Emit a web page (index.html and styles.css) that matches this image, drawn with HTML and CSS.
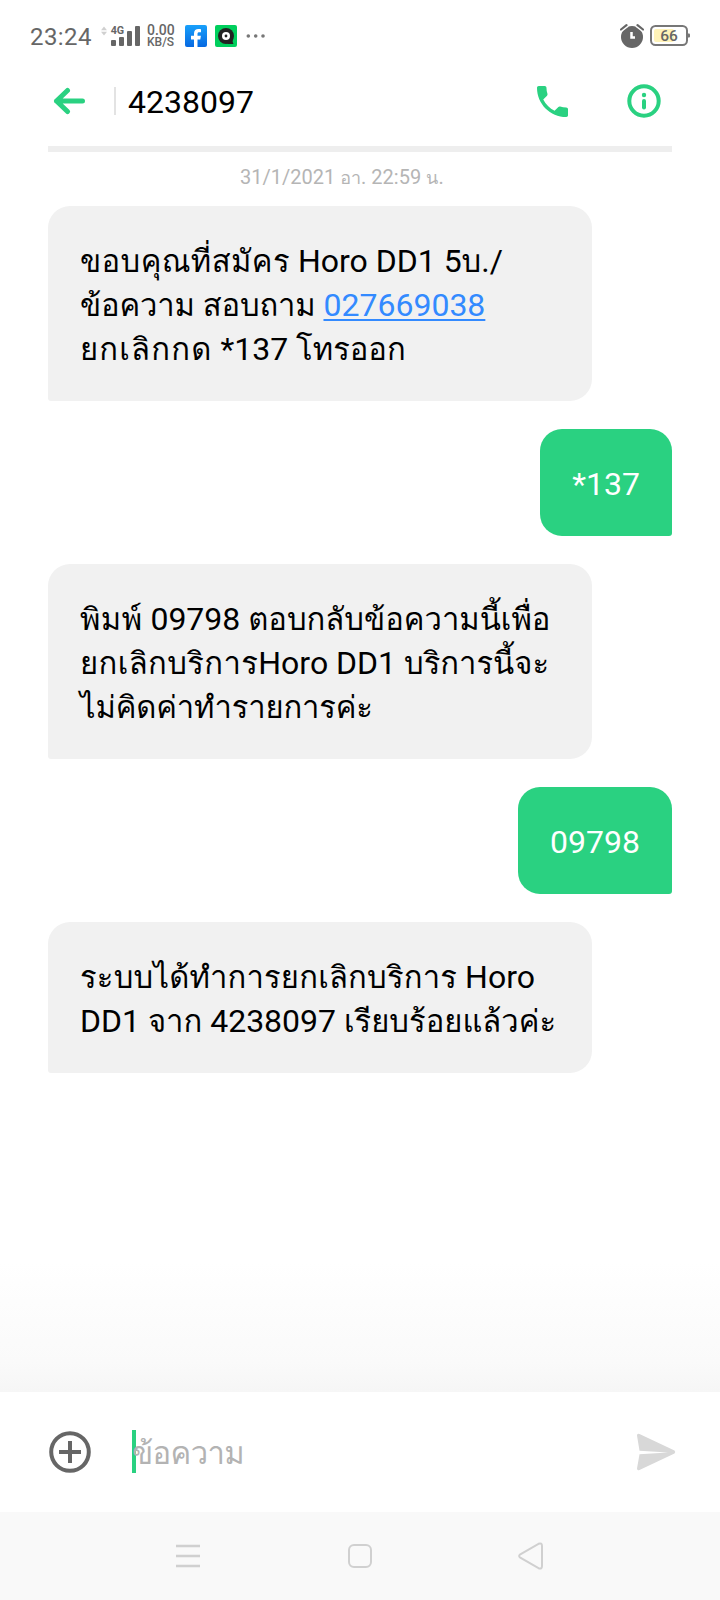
FILE: index.html
```html
<!DOCTYPE html>
<html lang="th">
<head>
<meta charset="utf-8">
<title>4238097</title>
<link rel="stylesheet" href="styles.css">
</head>
<body>
<div class="screen">
  <header class="status">
    <span class="clock">23:24</span>
    <svg class="signal" width="40" height="24" viewBox="0 0 40 24">
      <path d="M0 6.2 3 2.5 6 6.2ZM0 7.8h6L3 11.5Z" fill="#d0d0d0"/>
      <g fill="#666"><rect x="10" y="16" width="5" height="6" rx="1"/><rect x="18" y="13" width="5" height="9" rx="1"/><rect x="26" y="7" width="5" height="15" rx="1"/><rect x="34" y="2" width="5" height="20" rx="1"/></g>
      <text class="net" x="9.7" y="10" textLength="13.5" lengthAdjust="spacingAndGlyphs">4G</text>
    </svg>
    <span class="speed"><b class="rate">0.00</b><b class="unit">KB/S</b></span>
    <svg class="app" width="22" height="22" viewBox="0 0 22 22">
      <defs><linearGradient id="fb" x1="0" y1="0" x2="0" y2="1"><stop offset="0" stop-color="#18a0fb"/><stop offset="1" stop-color="#0668e1"/></linearGradient></defs>
      <rect width="22" height="22" rx="2" fill="url(#fb)"/>
      <path d="M9 22v-7.6H6v-3.6h3V8.6C9 5.4 10.8 4 13.4 4c1 0 1.9.1 2.6.2v3h-1.7c-1.4 0-1.8.7-1.8 1.7v1.9h3.4l-.6 3.6h-2.8V22Z" fill="#fff"/>
    </svg>
    <svg class="app" width="22" height="22" viewBox="0 0 22 22">
      <rect width="22" height="22" rx="2" fill="#00cf5d"/>
      <circle cx="11" cy="11" r="8" fill="#222"/>
      <path d="M12 19h6.500l-.8-2V12Z" fill="#222"/>
      <circle cx="11" cy="11" r="4" fill="#fff"/><circle cx="11" cy="11" r="1.400" fill="#222"/>
    </svg>
    <svg class="more" width="20" height="6" viewBox="0 0 20 6"><g fill="#777"><circle cx="2.300" cy="3" r="1.800"/><circle cx="9.700" cy="3" r="1.800"/><circle cx="17" cy="3" r="1.800"/></g></svg>
    <svg class="alarm" width="24" height="24" viewBox="0 0 24 24">
      <circle cx="12" cy="13" r="11" fill="#666"/>
      <path d="M0 8 8 2M24 8 16 2" stroke="#fff" stroke-width="2"/>
      <path d="M1 5.500 6.500 1.200M23 5.500 17.500 1.200" stroke="#666" stroke-width="2.200" stroke-linecap="round"/>
      <path d="M11.500 8v5.500H15" fill="none" stroke="#fff" stroke-width="2.500"/>
    </svg>
    <svg class="battery" width="40" height="22" viewBox="0 0 40 22">
      <rect x="1" y="1" width="36" height="19" rx="4.500" fill="#fff" stroke="#777" stroke-width="2"/>
      <path d="M38 8.500h1q1 0 1 1v2q0 1-1 1h-1Z" fill="#777"/>
      <rect x="4" y="4" width="20" height="13" rx="2" fill="#fff3b8"/>
      <text class="percent" x="19" y="16" text-anchor="middle">66</text>
    </svg>
  </header>

  <nav class="topbar">
    <svg class="back" width="32" height="28" viewBox="0 0 32 28"><path d="M3.500 14H29.500M14.500 3.500 3.500 14l11 10.500" fill="none" stroke="#2ad181" stroke-width="5" stroke-linecap="round" stroke-linejoin="round"/></svg>
    <span class="rule"></span>
    <h1 class="title">4238097</h1>
    <svg class="call" width="31" height="31" viewBox="3 3 18 18"><path d="M6.620 10.790c1.440 2.830 3.760 5.140 6.590 6.590l2.200-2.200c.27-.27.67-.36 1.020-.24 1.120.37 2.330.57 3.570.57.550 0 1 .450 1 1V20c0 .550-.450 1-1 1-9.390 0-17-7.610-17-17 0-.550.450-1 1-1h3.500c.550 0 1 .450 1 1 0 1.250.2 2.450.570 3.570.11.350.030.740-.250 1.020l-2.200 2.200z" fill="#2ad181"/></svg>
    <svg class="info" width="34" height="34" viewBox="0 0 34 34"><circle cx="17" cy="17" r="14.700" fill="none" stroke="#2ad181" stroke-width="4"/><circle cx="17" cy="11" r="2.200" fill="#2ad181"/><path d="M17 17v6.500" stroke="#2ad181" stroke-width="4" stroke-linecap="round"/></svg>
  </nav>

  <main class="thread">
    <time class="date">31/1/2021 <span class="th">อา</span>. 22:59 <span class="th">น</span>.</time>
    <div class="bubble in"><span class="line"><span class="th open">ขอบคุณที่สมัคร</span> Horo DD1 5<span class="th">บ</span>./</span><span class="line"><span class="th snug">ข้อความ</span> <span class="th snug">สอบถาม</span> <a class="tel">027669038</a></span><span class="line"><span class="th wide">ยกเลิกกด</span> *137 <span class="th">โทรออก</span></span></div>
    <div class="bubble out"><span class="line">*137</span></div>
    <div class="bubble in"><span class="line"><span class="th open">พิมพ์</span> 09798 <span class="th">ตอบกลับข้อความนี้เพื่อ</span></span><span class="line"><span class="th open">ยกเลิกบริการ</span>Horo DD1 <span class="th">บริการนี้จะ</span></span><span class="line"><span class="th snug">ไม่คิดค่าทำรายการค่ะ</span></span></div>
    <div class="bubble out"><span class="line">09798</span></div>
    <div class="bubble in"><span class="line"><span class="th loose">ระบบได้ทำการยกเลิกบริการ</span> Horo</span><span class="line">DD1 <span class="th">จาก</span> 4238097 <span class="th">เรียบร้อยแล้วค่ะ</span></span></div>
  </main>

  <section class="composer">
    <svg class="add" width="42" height="42" viewBox="0 0 42 42"><circle cx="21" cy="21" r="18.800" fill="none" stroke="#666" stroke-width="4"/><path d="M10 21h22M21 10v22" stroke="#666" stroke-width="4"/></svg>
    <div class="field"><span class="hint"><span class="th">ข้อความ</span></span></div>
    <svg class="send" width="40" height="38" viewBox="0 0 40 38"><path d="M1 2.500Q1 0 3.500 1L38.500 17.500Q40 19 38.500 20.500L3.500 37Q1 38 1 35.500L3.500 21.300 32 19.500 3.500 17.700Z" fill="#d8d8d8"/></svg>
  </section>

  <footer class="navbar">
    <svg width="24" height="24" viewBox="0 0 24 24"><path d="M0 2h24M0 12h24M0 22h24" stroke="#d0d0d0" stroke-width="2.300"/></svg>
    <svg class="home" width="24" height="24" viewBox="0 0 24 24"><rect x="1" y="1" width="22" height="22" rx="5" fill="none" stroke="#d0d0d0" stroke-width="2"/></svg>
    <svg width="26" height="28" viewBox="0 0 26 28"><path d="M2.300 12.300 20.500 1.800Q24 .500 24 4V24Q24 27.500 20.500 26.200L2.300 15.700Q0 14 2.300 12.300Z" fill="none" stroke="#d0d0d0" stroke-width="2"/></svg>
  </footer>
</div>
</body>
</html>
```
FILE: styles.css
```css
* { box-sizing: border-box; }
body { margin: 0; background: #fff; font-family: Roboto, Loma, "Noto Sans Thai Looped", sans-serif; }
svg { display: block; flex: none; }
.screen { width: 720px; height: 1600px; display: flex; flex-direction: column; overflow: hidden; }

/* Thai runs sit slightly smaller than the Latin text around them */
.th { font-size: .968em; }
.snug { letter-spacing: -.15px; }
.loose { letter-spacing: .2px; }
.open { letter-spacing: .4px; }
.wide { letter-spacing: 1.2px; }

.status { height: 72px; flex: none; display: flex; align-items: center; padding: 0 30px; color: #666; }
.clock { font-size: 24px; line-height: 28px; width: 62px; margin-top: 1px; letter-spacing: .4px; }
.signal { margin-left: 9px; }
.net { font: 700 10.5px Roboto, sans-serif; fill: #666; }
.speed { display: flex; flex-direction: column; width: 30px; margin-left: 6px; }
.speed b { font-weight: 500; line-height: 12px; white-space: nowrap; }
.rate { font-size: 14px; }
.unit { font-size: 12px; }
.app { margin-left: 8px; }
.more { margin-left: 9px; }
.alarm { margin-left: auto; }
.battery { margin-left: 6px; }
.percent { font: 500 15.5px Roboto, sans-serif; fill: #666; }

.topbar { height: 80px; flex: none; margin: 0 48px; border-bottom: 6px solid #eee; display: flex; align-items: center; padding: 0 11px 16px 5px; }
.rule { width: 2px; height: 28px; margin-left: 29px; background: #e3e3e3; }
.title { margin: 1px auto 0 12px; font-size: 32px; line-height: 40px; font-weight: 400; color: #000; }
.info { margin-left: 59px; }

.thread { flex: 1; display: flex; flex-direction: column; gap: 28px; padding: 0 48px; background: linear-gradient(#fff 0, #fff 1110px, #fafafa 1210px, #f6f6f6 1240px); }
.date { height: 54px; margin-bottom: -28px; padding-left: 192px; font-size: 20px; line-height: 50px; color: #b5b5b5; white-space: nowrap; }
.date .th { font-size: 18px; }
.bubble { font-size: 32px; padding: 33px 32px 30px; }
.line { display: block; height: 44px; line-height: 44px; white-space: nowrap; }
.in { width: 544px; background: #f1f1f1; color: #000; border-radius: 22px 22px 22px 3px; }
.out { align-self: flex-end; background: #2ad181; color: #fff; border-radius: 22px 22px 3px 22px; }
.tel { color: #338aff; text-decoration: underline; text-decoration-thickness: 2px; text-underline-offset: 3px; }

.composer { height: 120px; flex: none; display: flex; align-items: center; padding: 0 44px 0 49px; background: #fff; }
.field { flex: 1; height: 43px; margin: 0 0 1px 41px; border-left: 4px solid #2ad181; }
.hint { display: block; margin-left: -4px; font-size: 32px; line-height: 46px; color: #b3b3b3; letter-spacing: -.6px; }

.navbar { height: 88px; flex: none; display: flex; justify-content: space-between; align-items: center; padding: 0 176px; background: #f9f9f9; }
.home { margin-left: 2px; }
```
